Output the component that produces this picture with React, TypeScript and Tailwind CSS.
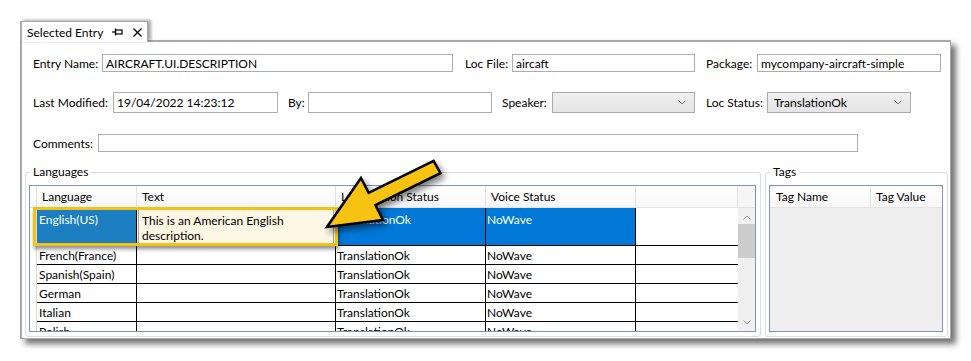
import React from "react";

const Chevron = ({ className = "" }: { className?: string }) => (
    <svg width="8" height="5" viewBox="0 0 8 5" className={className}>
        <polyline points="0.5,0.5 4,4 7.5,0.5" fill="none" stroke="currentColor" strokeWidth="1" />
    </svg>
);

// campo de texto de solo lectura
const Field = ({ w, h, children }: { w: string; h: string; children?: React.ReactNode }) => (
    <div className={`${w} ${h} border border-[#abadb3] bg-white flex items-center pl-[3px] whitespace-nowrap overflow-hidden`}>
        {children}
    </div>
);

const Combo = ({ w, children }: { w: string; children?: React.ReactNode }) => (
    <div className={`${w} h-[21px] border border-[#acacac] bg-gradient-to-b from-[#f0f0f0] to-[#e5e5e5] flex items-center justify-between pl-[6px] pr-[8px]`}>
        <span>{children}</span>
        <Chevron className="text-[#707070]" />
    </div>
);

const rows = ["French(France)", "Spanish(Spain)", "German", "Italian", "Polish"];

export default function App() {
    return (
        <div className="relative w-[971px] h-[361px] overflow-hidden bg-white pl-[20px] pt-[21px] text-[12px] leading-[15px] text-black font-['Lato','Noto_Sans',sans-serif]">
            {/* pestaña */}
            <div className="relative z-10 -mb-[2px] flex h-[21px] w-[128px] items-center border-l-2 border-r border-t border-[#a9a9a9] bg-white pl-[5px] shadow-[3px_-1px_3px_rgba(0,0,0,0.35)]">
                <span>Selected Entry</span>
                <svg width="11" height="8" viewBox="0 0 11 8" className="ml-[9px]">
                    <line x1="0" y1="4" x2="3" y2="4" stroke="black" strokeWidth="1.2" />
                    <line x1="3.5" y1="0.5" x2="3.5" y2="7.5" stroke="black" strokeWidth="1.2" />
                    <rect x="3.5" y="2" width="6.5" height="4" fill="none" stroke="black" strokeWidth="1.2" />
                </svg>
                <svg width="9" height="9" viewBox="0 0 9 9" className="ml-[10px]">
                    <line x1="0.5" y1="0.5" x2="8.5" y2="8.5" stroke="black" strokeWidth="1.3" />
                    <line x1="8.5" y1="0.5" x2="0.5" y2="8.5" stroke="black" strokeWidth="1.3" />
                </svg>
            </div>

            {/* panel principal */}
            <div className="w-[931px] h-[299px] border-l-2 border-t-2 border-r border-b border-[#a9a9a9] bg-white shadow-[5px_5px_6px_rgba(0,0,0,0.55)]">
                <div className="flex items-center pl-[11px] mt-[12px]">
                    <span className="w-[69px]">Entry Name:</span>
                    <Field w="w-[351px]" h="h-[18px]">AIRCRAFT.UI.DESCRIPTION</Field>
                    <span className="w-[47px] ml-[12px]">Loc File:</span>
                    <Field w="w-[183px]" h="h-[18px]">aircaft</Field>
                    <span className="w-[51px] ml-[11px]">Package:</span>
                    <Field w="w-[184px]" h="h-[18px]">mycompany-aircraft-simple</Field>
                </div>

                <div className="flex items-center pl-[11px] mt-[20px]">
                    <span className="w-[80px]">Last Modified:</span>
                    <Field w="w-[165px]" h="h-[21px]">19/04/2022 14:23:12</Field>
                    <span className="w-[20px] ml-[10px]">By:</span>
                    <Field w="w-[184px]" h="h-[21px]" />
                    <span className="w-[50px] ml-[10px]">Speaker:</span>
                    <Combo w="w-[143px]" />
                    <span className="w-[61px] ml-[11px]">Loc Status:</span>
                    <Combo w="w-[144px]">TranslationOk</Combo>
                </div>

                <div className="flex items-center pl-[11px] mt-[21px]">
                    <span className="w-[65px]">Comments:</span>
                    <Field w="w-[760px]" h="h-[18px]" />
                </div>

                <div className="flex gap-[4px] pl-[3px] mt-[13px]">
                    {/* Languages */}
                    <fieldset className="w-[736px] h-[172px] border border-[#d5dfe5] rounded-[3px] px-[3px] pt-[6px]">
                        <legend className="ml-[1px] px-[3px] leading-[14px]">Languages</legend>
                        <div className="relative w-[727px] h-[147px] border border-[#7f96b0] flex">
                            <div className="w-[708px] flex flex-col">
                                <div className="flex h-[22px] border-b border-[#e3e3e3] bg-gradient-to-b from-white to-[#f7f7f7]">
                                    <div className="w-[7px] border-r border-[#e3e3e3]" />
                                    <div className="w-[100px] border-r border-[#e3e3e3] pl-[5px] flex items-center">Language</div>
                                    <div className="w-[199px] border-r border-[#e3e3e3] pl-[5px] flex items-center">Text</div>
                                    <div className="w-[150px] border-r border-[#e3e3e3] pl-[5px] flex items-center">Localization Status</div>
                                    <div className="w-[150px] border-r border-[#e3e3e3] pl-[5px] flex items-center">Voice Status</div>
                                    <div className="flex-1 border-r border-[#e3e3e3]" />
                                </div>
                                <div className="flex-1 overflow-hidden">
                                    <div className="flex h-[38px]">
                                        <div className="w-[7px] border-r border-[#d9d9d9]" />
                                        <div className="w-[100px] border-r border-b border-black bg-[#1b7fc1] text-white pl-[2px] pt-[4px]">English(US)</div>
                                        <div className="w-[199px] border-r border-b border-black bg-[#fdf7e5] p-[1px]">
                                            <div className="h-full border border-[#9aa3ab] pl-[3px] pt-[3px]">
                                                This is an American English
                                                <br />
                                                description.
                                            </div>
                                        </div>
                                        <div className="w-[150px] border-r border-b border-black bg-[#0078d7] text-white pl-[2px] pt-[4px]">TranslationOk</div>
                                        <div className="w-[150px] border-r border-b border-black bg-[#0078d7] text-white pl-[1px] pt-[4px]">NoWave</div>
                                        <div className="flex-1 border-b border-black" />
                                    </div>
                                    {rows.map((r) => (
                                        <div key={r} className="flex h-[19px]">
                                            <div className="w-[7px] border-r border-[#d9d9d9]" />
                                            <div className="w-[100px] border-r border-b border-black pl-[2px] flex items-center">{r}</div>
                                            <div className="w-[199px] border-r border-b border-black" />
                                            <div className="w-[150px] border-r border-b border-black pl-[1px] flex items-center">TranslationOk</div>
                                            <div className="w-[150px] border-r border-b border-black pl-[1px] flex items-center">NoWave</div>
                                            <div className="flex-1 border-b border-black" />
                                        </div>
                                    ))}
                                </div>
                            </div>
                            {/* barra de scroll */}
                            <div className="w-[17px] bg-[#f0f0f0] flex flex-col items-center">
                                <div className="h-[22px] w-full bg-[#f5f5f5] border-b border-[#e3e3e3]" />
                                <Chevron className="mt-[7px] rotate-180 text-[#9a9a9a]" />
                                <div className="mt-[4px] w-full h-[34px] bg-[#cdcdcd]" />
                                <div className="flex-1" />
                                <Chevron className="mb-[6px] text-[#9a9a9a]" />
                            </div>

                            {/* resaltado amarillo */}
                            <div className="absolute left-[3px] top-[21px] w-[305px] h-[39px] border-[3px] border-[#f5c211] shadow-[1px_3px_4px_rgba(0,0,0,0.45)]" />
                        </div>
                    </fieldset>

                    {/* Tags */}
                    <fieldset className="w-[183px] h-[172px] border border-[#d5dfe5] rounded-[3px] px-[3px] pt-[6px]">
                        <legend className="ml-[1px] px-[3px] leading-[14px]">Tags</legend>
                        <div className="w-[174px] h-[147px] border border-[#7f96b0] flex flex-col bg-[#eeeeee]">
                            <div className="flex h-[22px] border-b border-[#e3e3e3] bg-gradient-to-b from-white to-[#f7f7f7]">
                                <div className="w-[101px] border-r border-[#e3e3e3] pl-[6px] flex items-center">Tag Name</div>
                                <div className="flex-1 pl-[5px] flex items-center">Tag Value</div>
                            </div>
                        </div>
                    </fieldset>
                </div>
            </div>

            {/* flecha */}
            <svg width="140" height="100" viewBox="0 0 140 100" className="absolute left-[320px] top-[150px] drop-shadow-[3px_4px_3px_rgba(0,0,0,0.5)]">
                <polygon
                    points="7,77 63,70 55.4,55.1 120.4,23.1 113.6,10.9 48.6,42.9 41,28"
                    fill="#f6c312"
                    stroke="black"
                    strokeWidth="2.5"
                    strokeLinejoin="miter"
                />
            </svg>
        </div>
    );
}
